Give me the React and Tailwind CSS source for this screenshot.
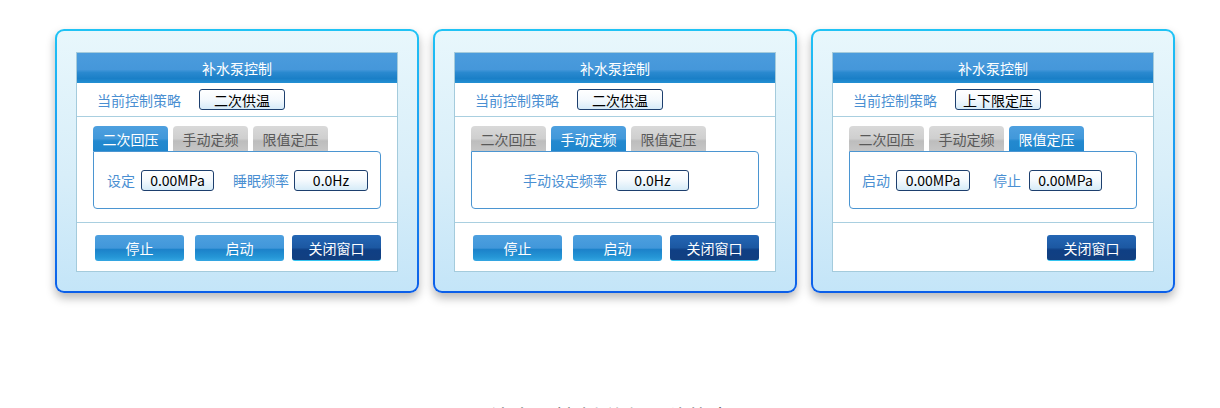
import React from "react";

const FONT = { fontFamily: '"Noto Sans CJK SC", "Noto Sans", sans-serif' };

const TABS = ["二次回压", "手动定频", "限值定压"];

function ValueBox({ value, w = "w-[74px]" }) {
  return (
    <div className={`${w} h-[21px] rounded-[3px] border border-[#1d3f6e] bg-[linear-gradient(to_bottom,#ffffff_0%,#f4f9fd_50%,#d6ebf8_100%)] flex items-center justify-center text-[14px] text-black leading-none whitespace-nowrap shadow-[inset_0_1px_0_#ffffff]`}>
      {value}
    </div>
  );
}

function BlueButton({ children, dark, className = "" }) {
  return (
    <div
      className={`w-[89px] h-[26px] rounded-[3px] flex items-center justify-center text-[14px] text-white leading-none ${
        dark
          ? "bg-[linear-gradient(to_bottom,#2466b4_0%,#1c58a2_50%,#0f3f84_60%,#123f80_100%)] border-b border-[#33c4f0]"
          : "bg-[linear-gradient(to_bottom,#4ea0df_0%,#4197da_50%,#1c82ca_56%,#2596d6_85%,#35a6e2_100%)]"
      } ${className}`}
    >
      {children}
    </div>
  );
}

function Tab({ label, active }) {
  return (
    <div
      className={`w-[75px] h-[25px] rounded-t-[4px] flex items-center justify-center text-[14px] leading-none ${
        active
          ? "bg-[linear-gradient(to_bottom,#4ea0df_0%,#4298da_50%,#2389cf_60%,#1e86cd_100%)] text-white"
          : "bg-[linear-gradient(to_bottom,#d9d9d9_0%,#cfcfcf_50%,#bdbdbd_60%,#c6c6c6_100%)] text-[#595959]"
      }`}
    >
      {label}
    </div>
  );
}

function PumpCard({ strategy, active, content, buttons }) {
  return (
    <div className="w-[364px] h-[264px] rounded-[9px] p-[2px] bg-[linear-gradient(to_bottom,#1fc3f5_0%,#1a8ff0_60%,#0b5ee9_100%)] shadow-[0_5px_10px_rgba(0,0,0,0.28)]">
      <div className="w-full h-full rounded-[7px] bg-[linear-gradient(to_bottom,#e8f7fc_0%,#d8eef9_55%,#c4e5f8_100%)] pt-[21px] px-[19px]">
        <div className="w-[322px] h-[220px] bg-white border border-[#a4cbdc] flex flex-col">
          <div className="h-[30px] bg-[linear-gradient(to_bottom,#4b9cdd_0%,#4597da_55%,#2a89cf_65%,#1a7fc7_85%,#2390d3_100%)] flex items-center justify-center text-white text-[14px] leading-none">
            补水泵控制
          </div>
          <div className="h-[34px] flex items-center pl-[20px] border-b border-[#a9cfe0]">
            <span className="text-[14px] text-[#4a8fd2] leading-none w-[102px] whitespace-nowrap">当前控制策略</span>
            <ValueBox value={strategy} w="w-[86px]" />
          </div>
          <div className="h-[106px] pt-[9px] px-[16px] border-b border-[#a9cfe0]">
            <div className="flex gap-[5px]">
              {TABS.map((t, i) => (
                <Tab key={t} label={t} active={i === active} />
              ))}
            </div>
            <div className="h-[58px] border border-[#4b95d1] rounded-b-[4px] rounded-tr-[4px] flex items-center">
              {content}
            </div>
          </div>
          <div className="flex-1 flex items-start pt-[12px]">{buttons}</div>
        </div>
      </div>
    </div>
  );
}

const Label = ({ children, className = "" }) => (
  <span className={`text-[14px] text-[#4a8fd2] leading-none whitespace-nowrap ${className}`}>{children}</span>
);

export default function App() {
  const threeButtons = (
    <div className="flex pl-[18px]">
      <BlueButton>停止</BlueButton>
      <BlueButton className="ml-[11px]">启动</BlueButton>
      <BlueButton dark className="ml-[8px]">关闭窗口</BlueButton>
    </div>
  );

  return (
    <div style={FONT} className="w-[1220px] h-[408px] bg-white overflow-hidden">
      <div className="flex gap-[14px] pt-[29px] pl-[55px]">
        <PumpCard
          strategy="二次供温"
          active={0}
          content={
            <div className="flex items-center pl-[13px]">
              <Label className="w-[34px]">设定</Label>
              <ValueBox value="0.00MPa" w="w-[73px]" />
              <Label className="ml-[19px] w-[61px]">睡眠频率</Label>
              <ValueBox value="0.0Hz" />
            </div>
          }
          buttons={threeButtons}
        />
        <PumpCard
          strategy="二次供温"
          active={1}
          content={
            <div className="flex items-center pl-[51px]">
              <Label className="w-[93px]">手动设定频率</Label>
              <ValueBox value="0.0Hz" w="w-[73px]" />
            </div>
          }
          buttons={threeButtons}
        />
        <PumpCard
          strategy="上下限定压"
          active={2}
          content={
            <div className="flex items-center pl-[12px]">
              <Label className="w-[34px]">启动</Label>
              <ValueBox value="0.00MPa" />
              <Label className="ml-[23px] w-[36px]">停止</Label>
              <ValueBox value="0.00MPa" w="w-[73px]" />
            </div>
          }
          buttons={
            <div className="flex w-full justify-end pr-[17px]">
              <BlueButton dark>关闭窗口</BlueButton>
            </div>
          }
        />
      </div>
      <div className="mt-[112px] text-center text-[22px] text-[#444] leading-none">
        补水泵控制弹窗三种状态
      </div>
    </div>
  );
}
